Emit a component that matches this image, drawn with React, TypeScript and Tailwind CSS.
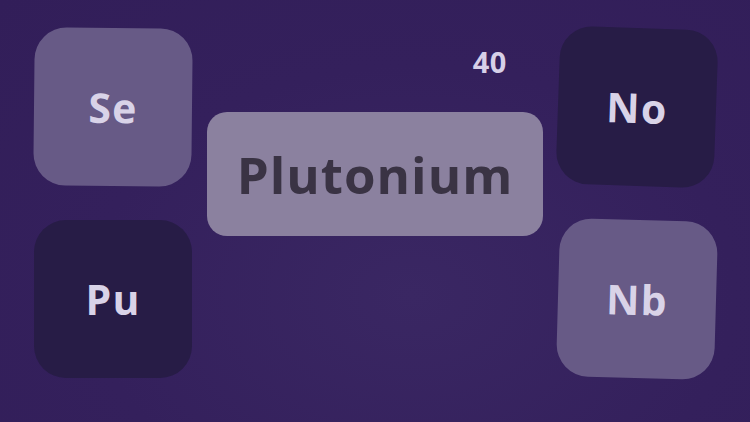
import type { ReactNode } from 'react';

const FONT = { fontFamily: '"Open Sans", "DejaVu Sans", sans-serif' };

function Tile({ label, tone, tilt }: { label: string; tone: 'light' | 'dark'; tilt: string }) {
  return (
    <div
      className={`flex h-[158px] w-[158px] items-center justify-center rounded-[32px] ${tilt} ${
        tone === 'light' ? 'bg-[#675a86]' : 'bg-[#271c46]'
      }`}
    >
      <span className="text-[41px] font-bold leading-none tracking-[0.03em] text-[#d9d3e8]">{label}</span>
    </div>
  );
}

function Column({ children, className }: { children: ReactNode; className?: string }) {
  return <div className={`flex flex-col gap-[34px] ${className ?? ''}`}>{children}</div>;
}

export default function App() {
  return (
    <div
      style={FONT}
      className="relative h-[422px] w-[750px] overflow-hidden bg-[radial-gradient(ellipse_at_55%_70%,#3a2763_0%,#34205c_55%,#321e59_100%)]"
    >
      <div className="flex pl-[34px] pt-[28px]">
        <Column>
          <Tile label="Se" tone="light" tilt="rotate-[0.6deg]" />
          <Tile label="Pu" tone="dark" tilt="rotate-[0deg]" />
        </Column>

        <div className="ml-[15px] flex w-[336px] flex-col">
          <div className="flex h-[84px] justify-end pr-[36px] pt-[19px]">
            <span className="text-[29px] font-bold leading-none tracking-[0.02em] text-[#d7d0e8]">40</span>
          </div>
          <div className="flex h-[124px] items-center justify-center rounded-[20px] bg-[#8b819f]">
            <span className="text-[51px] font-bold leading-none tracking-[0.02em] text-[#3a3344]">Plutonium</span>
          </div>
        </div>

        <Column className="ml-[15px]">
          <Tile label="No" tone="dark" tilt="rotate-[2deg]" />
          <Tile label="Nb" tone="light" tilt="rotate-[1.6deg]" />
        </Column>
      </div>
    </div>
  );
}
